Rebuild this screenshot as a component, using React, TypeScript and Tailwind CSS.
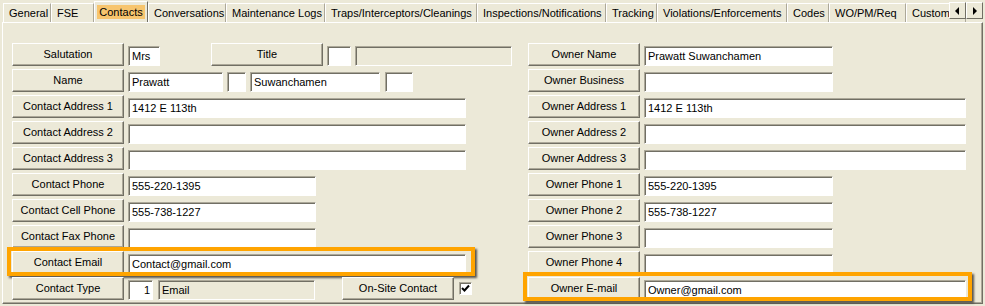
import React from "react";

const btn =
  "h-[23px] w-[112px] shrink-0 bg-[#ece9d8] border border-t-white border-l-white border-r-[#716f64] border-b-[#716f64] shadow-[inset_-1px_-1px_0_#aca899] flex items-center justify-center leading-none";
const inp =
  "h-[20px] shrink-0 border border-t-[#aca899] border-l-[#aca899] border-r-white border-b-white shadow-[inset_1px_1px_0_#716f64] flex items-center pl-[3px] pr-[2px] leading-none whitespace-nowrap overflow-hidden";

const Btn = ({ label, w = "w-[112px]" }: { label: string; w?: string }) => (
  <div className={`${btn} ${w}`}>{label}</div>
);

const Inp = ({
  value = "",
  w,
  ml = "ml-[4px]",
  disabled = false,
  right = false,
}: {
  value?: string;
  w: string;
  ml?: string;
  disabled?: boolean;
  right?: boolean;
}) => (
  <div
    className={`${inp} ${w} ${ml} ${disabled ? "bg-[#ece9d8]" : "bg-white"} ${
      right ? "justify-end" : ""
    }`}
  >
    {value}
  </div>
);

const Row = ({ children, hl }: { children: React.ReactNode; hl?: string }) => (
  <div className="relative flex items-end h-[23px] mb-[3px]">
    {children}
    {hl && (
      <span
        className={`absolute ${hl} border-4 border-[#ffa400] shadow-[2px_2px_2px_rgba(40,36,30,0.75)]`}
      />
    )}
  </div>
);

const tabs: [string, string][] = [
  ["General", "w-[48px]"],
  ["FSE", "w-[43px]"],
  ["Contacts", "w-[54px]"],
  ["Conversations", "w-[78px]"],
  ["Maintenance Logs", "w-[99px]"],
  ["Traps/Interceptors/Cleanings", "w-[152px]"],
  ["Inspections/Notifications", "w-[129px]"],
  ["Tracking", "w-[51px]"],
  ["Violations/Enforcements", "w-[130px]"],
  ["Codes", "w-[42px]"],
  ["WO/PM/Req", "w-[77px]"],
  ["Custom", "w-[60px]"],
];

const TabBar = () => (
  <div className="relative h-[22px] flex items-end pl-[3px] overflow-hidden">
    {tabs.map(([t, w]) =>
      t === "Contacts" ? (
        <div
          key={t}
          className={`${w} shrink-0 h-[22px] z-10 -mb-px bg-[#ece9d8] border-t border-l border-t-white border-l-white border-r border-r-[#716f64] flex items-start justify-center pt-[3px]`}
        >
          <span className="bg-[#f7c56e] px-[2px] h-[14px] leading-[14px]">{t}</span>
        </div>
      ) : (
        <div
          key={t}
          className={`${w} shrink-0 h-[19px] border-t border-l border-t-white border-l-white border-r border-r-[#aca899] flex items-start pt-[3px] pl-[5px] whitespace-nowrap leading-[13px]`}
        >
          {t}
        </div>
      )
    )}
    <div className="absolute right-[2px] top-[2px] flex">
      <div className="w-[17px] h-[17px] bg-[#ece9d8] border border-t-white border-l-white border-r-[#716f64] border-b-[#716f64] flex items-center justify-center">
        <svg width="5" height="8" viewBox="0 0 5 8">
          <path d="M4 0 L0 4 L4 8 Z" fill="#000" />
        </svg>
      </div>
      <div className="w-[17px] h-[17px] bg-[#ece9d8] border border-t-white border-l-white border-r-[#716f64] border-b-[#716f64] flex items-center justify-center">
        <svg width="5" height="8" viewBox="0 0 5 8">
          <path d="M1 0 L5 4 L1 8 Z" fill="#000" />
        </svg>
      </div>
    </div>
  </div>
);

const App = () => {
  return (
    <div className="w-[985px] h-[306px] bg-[#ece9d8] font-['Liberation_Sans',Arial,sans-serif] text-[11px] text-black overflow-hidden">
      <TabBar />
      <div className="mx-[2px] h-[282px] border border-t-white border-l-white border-r-[#716f64] border-b-[#716f64] shadow-[inset_-1px_-1px_0_#aca899] pt-[20px] pl-[9px] flex gap-[16px]">
        {/* contact column */}
        <div className="w-[500px] flex flex-col">
          <Row>
            <Btn label="Salutation" />
            <Inp value="Mrs" w="w-[32px]" />
            <div className="ml-[51px] self-stretch flex items-end">
              <Btn label="Title" />
            </div>
            <Inp w="w-[24px]" />
            <Inp w="w-[157px]" disabled />
          </Row>
          <Row>
            <Btn label="Name" />
            <Inp value="Prawatt" w="w-[95px]" />
            <Inp w="w-[19px]" />
            <Inp value="Suwanchamen" w="w-[130px]" />
            <Inp w="w-[28px]" ml="ml-[5px]" />
          </Row>
          <Row>
            <Btn label="Contact Address 1" />
            <Inp value="1412 E 113th" w="w-[338px]" />
          </Row>
          <Row>
            <Btn label="Contact Address 2" />
            <Inp w="w-[338px]" />
          </Row>
          <Row>
            <Btn label="Contact Address 3" />
            <Inp w="w-[338px]" />
          </Row>
          <Row>
            <Btn label="Contact Phone" />
            <Inp value="555-220-1395" w="w-[188px]" />
          </Row>
          <Row>
            <Btn label="Contact Cell Phone" />
            <Inp value="555-738-1227" w="w-[188px]" />
          </Row>
          <Row>
            <Btn label="Contact Fax Phone" />
            <Inp w="w-[188px]" />
          </Row>
          <Row hl="-left-[5px] -top-[4px] -bottom-[2px] w-[468px]">
            <Btn label="Contact Email" />
            <Inp value="Contact@gmail.com" w="w-[338px]" />
          </Row>
          <Row>
            <Btn label="Contact Type" />
            <Inp value="1" w="w-[25px]" right />
            <Inp value="Email" w="w-[157px]" ml="ml-[5px]" disabled />
            <div className="ml-[27px] self-stretch flex items-end">
              <Btn label="On-Site Contact" />
            </div>
            <div className="ml-[5px] mb-[5px] w-[13px] h-[13px] bg-white border border-t-[#aca899] border-l-[#aca899] border-r-white border-b-white shadow-[inset_1px_1px_0_#716f64] flex items-center justify-center">
              <svg width="9" height="9" viewBox="0 0 9 9">
                <path d="M1 4 L3.5 6.5 L8 1.5" stroke="#000" strokeWidth="2" fill="none" />
              </svg>
            </div>
          </Row>
        </div>
        {/* owner column */}
        <div className="w-[440px] flex flex-col">
          <Row>
            <Btn label="Owner Name" />
            <Inp value="Prawatt Suwanchamen" w="w-[189px]" />
          </Row>
          <Row>
            <Btn label="Owner Business" />
            <Inp w="w-[189px]" />
          </Row>
          <Row>
            <Btn label="Owner Address 1" />
            <Inp value="1412 E 113th" w="w-[322px]" />
          </Row>
          <Row>
            <Btn label="Owner Address 2" />
            <Inp w="w-[322px]" />
          </Row>
          <Row>
            <Btn label="Owner Address 3" />
            <Inp w="w-[322px]" />
          </Row>
          <Row>
            <Btn label="Owner Phone 1" />
            <Inp value="555-220-1395" w="w-[189px]" />
          </Row>
          <Row>
            <Btn label="Owner Phone 2" />
            <Inp value="555-738-1227" w="w-[189px]" />
          </Row>
          <Row>
            <Btn label="Owner Phone 3" />
            <Inp w="w-[189px]" />
          </Row>
          <Row>
            <Btn label="Owner Phone 4" />
            <Inp w="w-[189px]" />
          </Row>
          <Row hl="-left-[5px] -top-[5px] -bottom-[1px] w-[449px]">
            <Btn label="Owner E-mail" />
            <Inp value="Owner@gmail.com" w="w-[322px]" />
          </Row>
        </div>
      </div>
    </div>
  );
};

export default App;
